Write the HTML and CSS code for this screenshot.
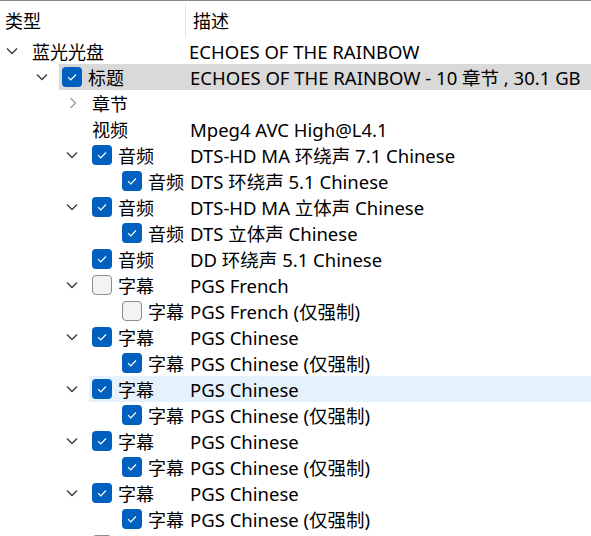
FILE: index.html
```html
<!DOCTYPE html>
<html lang="zh-CN">
<head>
    <meta charset="UTF-8">
    <title>轨道</title>
    <link rel="stylesheet" href="styles.css">
</head>
<body>

<div class="tree">
    <!-- 表头 -->
    <div class="header">
        <div class="col-name">类型</div>
        <div class="col-desc">描述</div>
    </div>

    <div class="row lvl0">
        <span class="chev"><svg width="12" height="8" viewBox="0 0 12 8"><path d="M1 1.5 L6 6.5 L11 1.5"/></svg></span>
        <div class="item">
            <div class="name">蓝光光盘</div>
            <div class="desc">ECHOES OF THE RAINBOW</div>
        </div>
    </div>

    <div class="row lvl1 selected">
        <span class="chev"><svg width="12" height="8" viewBox="0 0 12 8"><path d="M1 1.5 L6 6.5 L11 1.5"/></svg></span>
        <div class="item">
            <div class="name"><span class="cb on"><svg width="20" height="20" viewBox="0 0 20 20"><path d="M6 10.2 L8.8 13 L14 7.5"/></svg></span>标题</div>
            <div class="desc">ECHOES OF THE RAINBOW - 10 章节 , 30.1 GB</div>
        </div>
    </div>

    <div class="row lvl2">
        <span class="chev light"><svg width="8" height="12" viewBox="0 0 8 12"><path d="M1.5 1 L6.5 6 L1.5 11"/></svg></span>
        <div class="item">
            <div class="name">章节</div>
            <div class="desc"></div>
        </div>
    </div>

    <div class="row lvl2">
        <span class="chev"></span>
        <div class="item">
            <div class="name">视频</div>
            <div class="desc">Mpeg4 AVC High@L4.1</div>
        </div>
    </div>

    <div class="row lvl2">
        <span class="chev"><svg width="12" height="8" viewBox="0 0 12 8"><path d="M1 1.5 L6 6.5 L11 1.5"/></svg></span>
        <div class="item">
            <div class="name"><span class="cb on"><svg width="20" height="20" viewBox="0 0 20 20"><path d="M6 10.2 L8.8 13 L14 7.5"/></svg></span>音频</div>
            <div class="desc">DTS-HD MA 环绕声 7.1 Chinese</div>
        </div>
    </div>

    <div class="row lvl3">
        <span class="chev"></span>
        <div class="item">
            <div class="name"><span class="cb on"><svg width="20" height="20" viewBox="0 0 20 20"><path d="M6 10.2 L8.8 13 L14 7.5"/></svg></span>音频</div>
            <div class="desc">DTS 环绕声 5.1 Chinese</div>
        </div>
    </div>

    <div class="row lvl2">
        <span class="chev"><svg width="12" height="8" viewBox="0 0 12 8"><path d="M1 1.5 L6 6.5 L11 1.5"/></svg></span>
        <div class="item">
            <div class="name"><span class="cb on"><svg width="20" height="20" viewBox="0 0 20 20"><path d="M6 10.2 L8.8 13 L14 7.5"/></svg></span>音频</div>
            <div class="desc">DTS-HD MA 立体声 Chinese</div>
        </div>
    </div>

    <div class="row lvl3">
        <span class="chev"></span>
        <div class="item">
            <div class="name"><span class="cb on"><svg width="20" height="20" viewBox="0 0 20 20"><path d="M6 10.2 L8.8 13 L14 7.5"/></svg></span>音频</div>
            <div class="desc">DTS 立体声 Chinese</div>
        </div>
    </div>

    <div class="row lvl2">
        <span class="chev"></span>
        <div class="item">
            <div class="name"><span class="cb on"><svg width="20" height="20" viewBox="0 0 20 20"><path d="M6 10.2 L8.8 13 L14 7.5"/></svg></span>音频</div>
            <div class="desc">DD 环绕声 5.1 Chinese</div>
        </div>
    </div>

    <div class="row lvl2">
        <span class="chev"><svg width="12" height="8" viewBox="0 0 12 8"><path d="M1 1.5 L6 6.5 L11 1.5"/></svg></span>
        <div class="item">
            <div class="name"><span class="cb"></span>字幕</div>
            <div class="desc">PGS French</div>
        </div>
    </div>

    <div class="row lvl3">
        <span class="chev"></span>
        <div class="item">
            <div class="name"><span class="cb"></span>字幕</div>
            <div class="desc">PGS French (仅强制)</div>
        </div>
    </div>

    <div class="row lvl2">
        <span class="chev"><svg width="12" height="8" viewBox="0 0 12 8"><path d="M1 1.5 L6 6.5 L11 1.5"/></svg></span>
        <div class="item">
            <div class="name"><span class="cb on"><svg width="20" height="20" viewBox="0 0 20 20"><path d="M6 10.2 L8.8 13 L14 7.5"/></svg></span>字幕</div>
            <div class="desc">PGS Chinese</div>
        </div>
    </div>

    <div class="row lvl3">
        <span class="chev"></span>
        <div class="item">
            <div class="name"><span class="cb on"><svg width="20" height="20" viewBox="0 0 20 20"><path d="M6 10.2 L8.8 13 L14 7.5"/></svg></span>字幕</div>
            <div class="desc">PGS Chinese (仅强制)</div>
        </div>
    </div>

    <div class="row lvl2 hover">
        <span class="chev"><svg width="12" height="8" viewBox="0 0 12 8"><path d="M1 1.5 L6 6.5 L11 1.5"/></svg></span>
        <div class="item">
            <div class="name"><span class="cb on"><svg width="20" height="20" viewBox="0 0 20 20"><path d="M6 10.2 L8.8 13 L14 7.5"/></svg></span>字幕</div>
            <div class="desc">PGS Chinese</div>
        </div>
    </div>

    <div class="row lvl3">
        <span class="chev"></span>
        <div class="item">
            <div class="name"><span class="cb on"><svg width="20" height="20" viewBox="0 0 20 20"><path d="M6 10.2 L8.8 13 L14 7.5"/></svg></span>字幕</div>
            <div class="desc">PGS Chinese (仅强制)</div>
        </div>
    </div>

    <div class="row lvl2">
        <span class="chev"><svg width="12" height="8" viewBox="0 0 12 8"><path d="M1 1.5 L6 6.5 L11 1.5"/></svg></span>
        <div class="item">
            <div class="name"><span class="cb on"><svg width="20" height="20" viewBox="0 0 20 20"><path d="M6 10.2 L8.8 13 L14 7.5"/></svg></span>字幕</div>
            <div class="desc">PGS Chinese</div>
        </div>
    </div>

    <div class="row lvl3">
        <span class="chev"></span>
        <div class="item">
            <div class="name"><span class="cb on"><svg width="20" height="20" viewBox="0 0 20 20"><path d="M6 10.2 L8.8 13 L14 7.5"/></svg></span>字幕</div>
            <div class="desc">PGS Chinese (仅强制)</div>
        </div>
    </div>

    <div class="row lvl2">
        <span class="chev"><svg width="12" height="8" viewBox="0 0 12 8"><path d="M1 1.5 L6 6.5 L11 1.5"/></svg></span>
        <div class="item">
            <div class="name"><span class="cb on"><svg width="20" height="20" viewBox="0 0 20 20"><path d="M6 10.2 L8.8 13 L14 7.5"/></svg></span>字幕</div>
            <div class="desc">PGS Chinese</div>
        </div>
    </div>

    <div class="row lvl3">
        <span class="chev"></span>
        <div class="item">
            <div class="name"><span class="cb on"><svg width="20" height="20" viewBox="0 0 20 20"><path d="M6 10.2 L8.8 13 L14 7.5"/></svg></span>字幕</div>
            <div class="desc">PGS Chinese (仅强制)</div>
        </div>
    </div>

    <!-- 下一行只露出复选框顶边 -->
    <div class="row lvl2">
        <span class="chev"></span>
        <div class="item">
            <div class="name"><span class="cb"></span></div>
        </div>
    </div>
</div>

</body>
</html>
```

FILE: styles.css
```css
html, body {
    margin: 0;
    padding: 0;
    height: 100%;
    overflow: hidden;
    background: #FFFFFF;
}
body {
    font-family: "Noto Sans", "Noto Sans CJK SC", sans-serif;
    font-size: 18px;
    color: #000000;
}
.tree {
    border-top: 1px solid #8a8a8a;
}
.header {
    display: flex;
    height: 37px;
    align-items: center;
}
.header .col-name {
    width: 186px;
    box-sizing: border-box;
    padding-left: 5px;
    height: 35px;
    line-height: 37px;
    border-right: 1px solid #e5e5e5;
    align-self: flex-end;
}
.header .col-desc {
    padding-left: 7px;
}
.row {
    display: flex;
    height: 26px;
    align-items: stretch;
}
.chev {
    flex: none;
    width: 29px;
    display: flex;
    align-items: center;
    padding-left: 6px;
    box-sizing: border-box;
}
.chev svg path {
    fill: none;
    stroke: #3a3a3a;
    stroke-width: 1.3;
}
.chev.light svg {
    margin-left: 3px;
}
.chev.light svg path {
    stroke: #9a9a9a;
}
.lvl1 { padding-left: 30px; }
.lvl2 { padding-left: 60px; }
.lvl3 { padding-left: 90px; }
.item {
    flex: 1;
    display: flex;
    align-items: center;
    padding-left: 3px;
    white-space: nowrap;
}
.selected .item {
    background-color: #d9d9d9;
}
.hover .item {
    background-color: #e5f1fb;
}
.name {
    display: flex;
    align-items: center;
    flex: none;
}
.lvl0 .name { width: 157px; }
.lvl1 .name { width: 128px; }
.lvl2 .name { width: 98px; }
.lvl3 .name { width: 68px; }
.desc {
    font-size: 18.5px;
}
.cb {
    width: 20px;
    height: 20px;
    box-sizing: border-box;
    border-radius: 4px;
    border: 1px solid #8d8d8d;
    background: #f3f3f3;
    margin-right: 6px;
    flex: none;
}
.cb.on {
    border: none;
    background: #0060c0;
}
.cb svg {
    display: block;
}
.cb svg path {
    fill: none;
    stroke: #FFFFFF;
    stroke-width: 1.2;
}
```
